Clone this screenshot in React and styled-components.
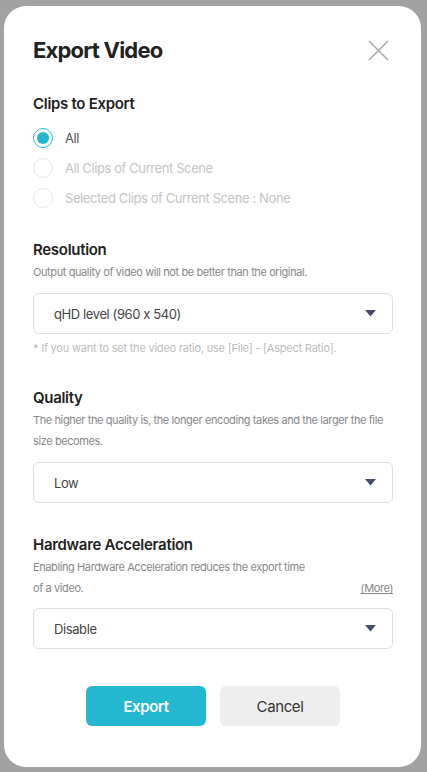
import React, { useState } from "react";
import styled, { createGlobalStyle } from "styled-components";

const GlobalStyle = createGlobalStyle`
    html, body {
        margin: 0;
        padding: 0;
        background-color: #a2a2a2;
        font-family: Inter, "Noto Sans", "Liberation Sans", sans-serif;
        letter-spacing: -0.025em;
        font-feature-settings: "calt" 0;
    }

    button {
        letter-spacing: inherit;
        font-feature-settings: inherit;
    }
`;

const Overlay = styled.div`
    width: 427px;
    height: 772px;
    padding: 6px 6px 5px 4px;
    box-sizing: border-box;
    background-color: #a2a2a2;
`;

const Modal = styled.div`
    display: flex;
    flex-direction: column;
    height: 100%;
    padding: 30px 28px 0 29px;
    box-sizing: border-box;
    background-color: #ffffff;
    border-radius: 22px;
`;

const Header = styled.div`
    display: flex;
    align-items: center;
    justify-content: space-between;
    height: 28px;
`;

const Title = styled.h1`
    margin: 0;
    font-size: 22px;
    font-weight: 700;
    color: #222;
    letter-spacing: -0.8px;
`;

const CloseButton = styled.button`
    display: flex;
    padding: 0;
    margin-right: 4px;
    border: none;
    background: none;
    cursor: pointer;
`;

const Section = styled.section`
    display: flex;
    flex-direction: column;
    margin-top: ${(props) => props.top}px;
`;

const Heading = styled.h2`
    margin: 0;
    font-size: 15px;
    line-height: 20px;
    font-weight: 600;
    color: #222;
    letter-spacing: -0.3px;
`;

const RadioList = styled.div`
    display: flex;
    flex-direction: column;
    margin-top: 9px;
`;

const RadioRow = styled.label`
    display: flex;
    align-items: center;
    gap: 12px;
    height: 30px;
    font-size: 13px;
    color: ${(props) => (props.disabled ? "#c4c4c4" : "#555")};
    cursor: ${(props) => (props.disabled ? "default" : "pointer")};
`;

const RadioCircle = styled.span`
    display: flex;
    align-items: center;
    justify-content: center;
    width: 20px;
    height: 20px;
    box-sizing: border-box;
    border-radius: 50%;
    border: 1.5px solid ${(props) => (props.checked ? "#24b8d0" : "#e6e6e6")};

    &::after {
        content: "";
        display: ${(props) => (props.checked ? "block" : "none")};
        width: 12px;
        height: 12px;
        border-radius: 50%;
        background-color: #24b8d0;
    }
`;

const Description = styled.p`
    margin: 2px 0 0 0;
    max-width: ${(props) => props.maxWidth || "none"};
    font-size: 11px;
    line-height: 21px;
    color: #888;
`;

const DescRow = styled.div`
    display: flex;
    align-items: flex-end;
    justify-content: space-between;
    gap: 20px;
`;

const MoreLink = styled.a`
    font-size: 11px;
    line-height: 21px;
    color: #888;
    text-decoration: underline;
    white-space: nowrap;
    cursor: pointer;
`;

const Select = styled.button`
    display: flex;
    align-items: center;
    justify-content: space-between;
    height: 41px;
    margin-top: ${(props) => props.top}px;
    padding: 0 16px 0 20px;
    box-sizing: border-box;
    width: 100%;
    background-color: #fff;
    border: 1px solid #dedede;
    border-radius: 6px;
    font-family: inherit;
    font-size: 13px;
    color: #444;
    cursor: pointer;
`;

const Note = styled.p`
    margin: 6px 0 0 0;
    font-size: 11px;
    line-height: 16px;
    letter-spacing: -0.02em;
    color: #bbb;
`;

const Footer = styled.div`
    display: flex;
    justify-content: center;
    gap: 14px;
    margin-top: 37px;
`;

const ActionButton = styled.button`
    width: 120px;
    height: 40px;
    border: none;
    border-radius: 6px;
    font-family: inherit;
    font-size: 15px;
    font-weight: ${(props) => (props.primary ? 600 : 400)};
    color: ${(props) => (props.primary ? "#fff" : "#333")};
    background-color: ${(props) => (props.primary ? "#24b8d0" : "#eeeeee")};
    cursor: pointer;
`;

const CloseIcon = () => (
    <svg width="21" height="21" viewBox="0 0 21 21">
        <path d="M1 1 L20 20 M20 1 L1 20" stroke="#ababab" strokeWidth="1.6" fill="none" />
    </svg>
);

const Caret = () => (
    <svg width="11" height="7" viewBox="0 0 11 7">
        <path d="M0 0 H11 L5.5 6.5 Z" fill="#454c6c" />
    </svg>
);

const DropDown = ({ value, top = 10 }) => (
    <Select type="button" top={top}>
        <span>{value}</span>
        <Caret />
    </Select>
);

const clipOptions = [
    { id: "all", label: "All" },
    { id: "scene", label: "All Clips of Current Scene", disabled: true },
    { id: "selected", label: "Selected Clips of Current Scene : None", disabled: true },
];

const App = () => {
    const [clips, setClips] = useState("all");

    return (
        <>
            <GlobalStyle />
            <Overlay>
                <Modal>
                    <Header>
                        <Title>Export Video</Title>
                        <CloseButton aria-label="Close">
                            <CloseIcon />
                        </CloseButton>
                    </Header>

                    <Section top={30}>
                        <Heading>Clips to Export</Heading>
                        <RadioList>
                            {clipOptions.map((opt) => (
                                <RadioRow
                                    key={opt.id}
                                    disabled={opt.disabled}
                                    onClick={() => !opt.disabled && setClips(opt.id)}
                                >
                                    <RadioCircle checked={clips === opt.id} />
                                    {opt.label}
                                </RadioRow>
                            ))}
                        </RadioList>
                    </Section>

                    <Section top={27}>
                        <Heading>Resolution</Heading>
                        <Description>Output quality of video will not be better than the original.</Description>
                        <DropDown value="qHD level (960 x 540)" />
                        <Note>* If you want to set the video ratio, use [File] - [Aspect Ratio].</Note>
                    </Section>

                    <Section top={32}>
                        <Heading>Quality</Heading>
                        <Description>
                            The higher the quality is, the longer encoding takes and the larger the file size becomes.
                        </Description>
                        <DropDown value="Low" />
                    </Section>

                    <Section top={32}>
                        <Heading>Hardware Acceleration</Heading>
                        <DescRow>
                            <Description maxWidth="282px">
                                Enabling Hardware Acceleration reduces the export time of a video.
                            </Description>
                            <MoreLink>(More)</MoreLink>
                        </DescRow>
                        <DropDown value="Disable" top={9} />
                    </Section>

                    <Footer>
                        <ActionButton primary>Export</ActionButton>
                        <ActionButton>Cancel</ActionButton>
                    </Footer>
                </Modal>
            </Overlay>
        </>
    );
};

export default App;
